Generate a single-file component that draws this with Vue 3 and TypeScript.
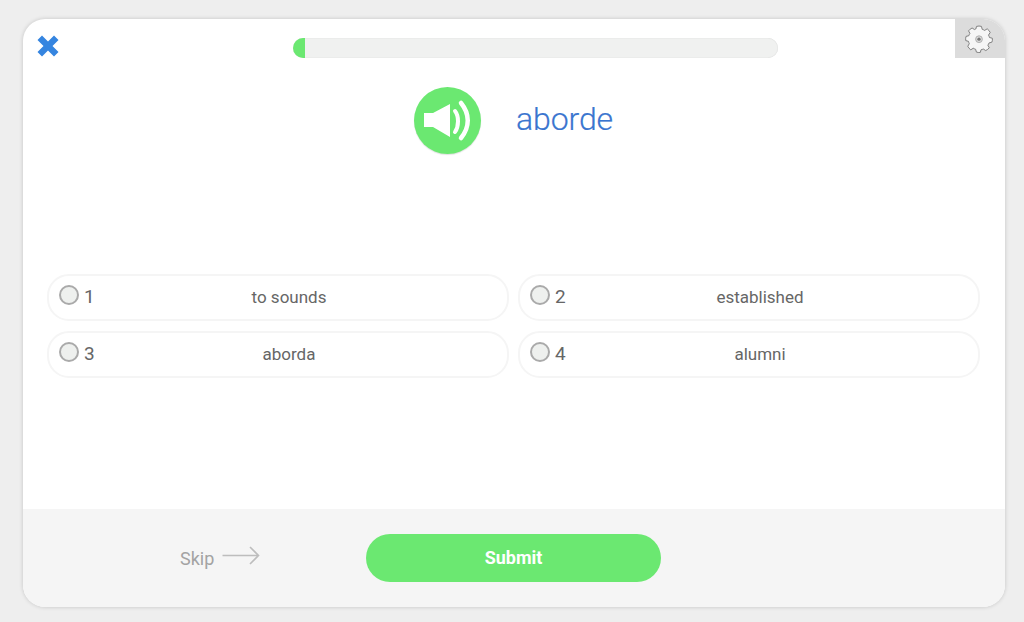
<script setup lang="ts">
const options = [
  { id: 1, label: "to sounds" },
  { id: 2, label: "established" },
  { id: 3, label: "aborda" },
  { id: 4, label: "alumni" },
];
const progress = 2.5;
</script>

<template>
  <div class="page">
    <div class="card">
      <header class="card__top">
        <button class="close" aria-label="Close">
          <svg width="22" height="22" viewBox="0 0 22 22">
            <path d="M5 0.5 L11 6.5 L17 0.5 L21.5 5 L15.5 11 L21.5 17 L17 21.5 L11 15.5 L5 21.5 L0.5 17 L6.5 11 L0.5 5 Z" fill="#3585e0" />
          </svg>
        </button>
        <div class="progress">
          <div class="progress__fill" :style="{ width: progress + '%' }"></div>
        </div>
        <button class="settings" aria-label="Settings">
          <svg width="28" height="28" viewBox="0 0 30 30">
            <path
              d="M12.4 1.5 Q15 0.7 17.6 1.5 L18.4 4.6 Q19.8 5 21 5.8 L23.8 4.1 Q25.9 5.7 27 8 L25.2 10.8 Q25.9 12 26.2 13.4 L29.3 14.2 Q29.6 16.8 28.8 18.4 L25.8 19.2 Q25.3 20.5 24.5 21.6 L26 24.4 Q24.4 26.4 22.2 27.4 L19.6 25.7 Q18.4 26.3 17.2 26.5 L16.4 29.4 Q14 29.7 12.2 29 L11.4 26 Q10 25.6 8.8 24.9 L6.2 26.6 Q4 25 3 22.8 L4.6 20 Q4 18.8 3.7 17.5 L0.8 16.7 Q0.4 14.2 1.1 12.2 L4.1 11.5 Q4.6 10 5.3 9 L3.8 6.3 Q5.4 4.2 7.6 3.2 L10.2 4.9 Q11.4 4.3 11.6 4.3 Z"
              fill="#f6f6f6"
              stroke="#7a7a7a"
              stroke-width="1"
              stroke-linejoin="round"
            />
            <circle cx="15" cy="15.2" r="3.6" fill="#ddd" stroke="#aaa" stroke-width="1" />
            <circle cx="15" cy="15.2" r="1.8" fill="#777" />
          </svg>
        </button>
      </header>

      <section class="prompt">
        <button class="sound" aria-label="Play sound">
          <svg width="67" height="67" viewBox="0 0 67 67">
            <path d="M10 26 L19 26 L36 17 L36 50 L19 40 L10 40 Z" fill="#fff" />
            <path d="M41 24 C45 29 45 39 41 45" fill="none" stroke="#fff" stroke-width="4" stroke-linecap="round" />
            <path d="M47 16 C56 27 56 40 47 51" fill="none" stroke="#fff" stroke-width="4.5" stroke-linecap="round" />
          </svg>
        </button>
        <span class="prompt__word">aborde</span>
      </section>

      <div class="options">
        <label v-for="opt in options" :key="opt.id" class="option">
          <span class="option__radio"></span>
          <span class="option__num">{{ opt.id }}</span>
          <span class="option__label">{{ opt.label }}</span>
        </label>
      </div>

      <footer class="card__footer">
        <a class="skip">
          <span>Skip</span>
          <svg width="38" height="20" viewBox="0 0 38 20">
            <path d="M0.5 9.5 L36 9.5 M28 1 L36.5 9.5 L28 18" fill="none" stroke="#bdbdbd" stroke-width="1.6" />
          </svg>
        </a>
        <button class="submit"><span class="submit__text">Submit</span></button>
      </footer>
    </div>
  </div>
</template>

<style>
html,
body {
  margin: 0;
  background: #eeeeee;
}
</style>

<style scoped>
.page {
  box-sizing: border-box;
  width: 1024px;
  height: 622px;
  padding: 19px 19px 15px 23px;
  background: #eeeeee;
  font-family: Roboto, "Open Sans", sans-serif;
}

button {
  padding: 0;
  border: 0;
  background: none;
  font-family: inherit;
}

.card {
  display: flex;
  flex-direction: column;
  height: 100%;
  overflow: hidden;
  background: #fff;
  border-radius: 22px;
  box-shadow: 0 0 4px rgba(0, 0, 0, 0.18);
}

.card__top {
  display: flex;
  align-items: flex-start;
  height: 39px;
}

.close {
  display: flex;
  margin: 16px 0 0 14px;
}

.progress {
  width: 485px;
  height: 20px;
  margin: 19px 0 0 234px;
  overflow: hidden;
  background: #f0f1f0;
  border-radius: 10px;
  box-shadow: inset 0 0 1px rgba(0, 0, 0, 0.2);
}

.progress__fill {
  height: 100%;
  background: #6be871;
}

.settings {
  display: flex;
  align-items: center;
  justify-content: center;
  width: 50px;
  height: 39px;
  padding-right: 2px;
  margin-left: auto;
  background: #dcdcdc;
}

.prompt {
  display: flex;
  align-items: center;
  margin: 29px 0 0 391px;
}

.sound {
  display: flex;
  width: 67px;
  height: 67px;
  background: #6be871;
  border-radius: 50%;
  box-shadow: 0 1px 1px rgba(0, 0, 0, 0.12);
}

.prompt__word {
  margin: -4px 0 0 35px;
  color: #3a75cf;
  font-size: 32px;
  font-weight: 300;
  line-height: 1;
  letter-spacing: -0.1px;
  -webkit-text-stroke: 0.2px #3a75cf;
}

.options {
  display: grid;
  grid-template-columns: 462px 462px;
  gap: 10px 9px;
  margin: 120px 0 0 24px;
}

.option {
  position: relative;
  box-sizing: border-box;
  display: flex;
  align-items: center;
  justify-content: center;
  height: 47px;
  padding-left: 22px;
  border: 2px solid #f5f5f5;
  border-radius: 22px;
  color: #666;
}

.option__radio {
  position: absolute;
  top: 9px;
  left: 10px;
  box-sizing: border-box;
  width: 20px;
  height: 20px;
  background: #eef0ee;
  border: 2px solid #aaa;
  border-radius: 50%;
}

.option__num {
  position: absolute;
  top: 8px;
  left: 35px;
  font-size: 19px;
  line-height: 26px;
}

.option__label {
  margin-top: -2px;
  font-size: 17px;
}

.card__footer {
  display: flex;
  align-items: center;
  height: 98px;
  margin-top: auto;
  background: #f5f5f5;
}

.skip {
  display: flex;
  align-items: center;
  width: 186px;
  margin-left: 157px;
  color: #a3a3a3;
  font-size: 18px;
}

.skip svg {
  margin: -4px 0 0 8px;
}

.submit {
  width: 295px;
  height: 48px;
  background: #6be871;
  border-radius: 24px;
  color: #fff;
  font-size: 18px;
  font-weight: 700;
}

.submit__text {
  position: relative;
  top: -1px;
}
</style>
